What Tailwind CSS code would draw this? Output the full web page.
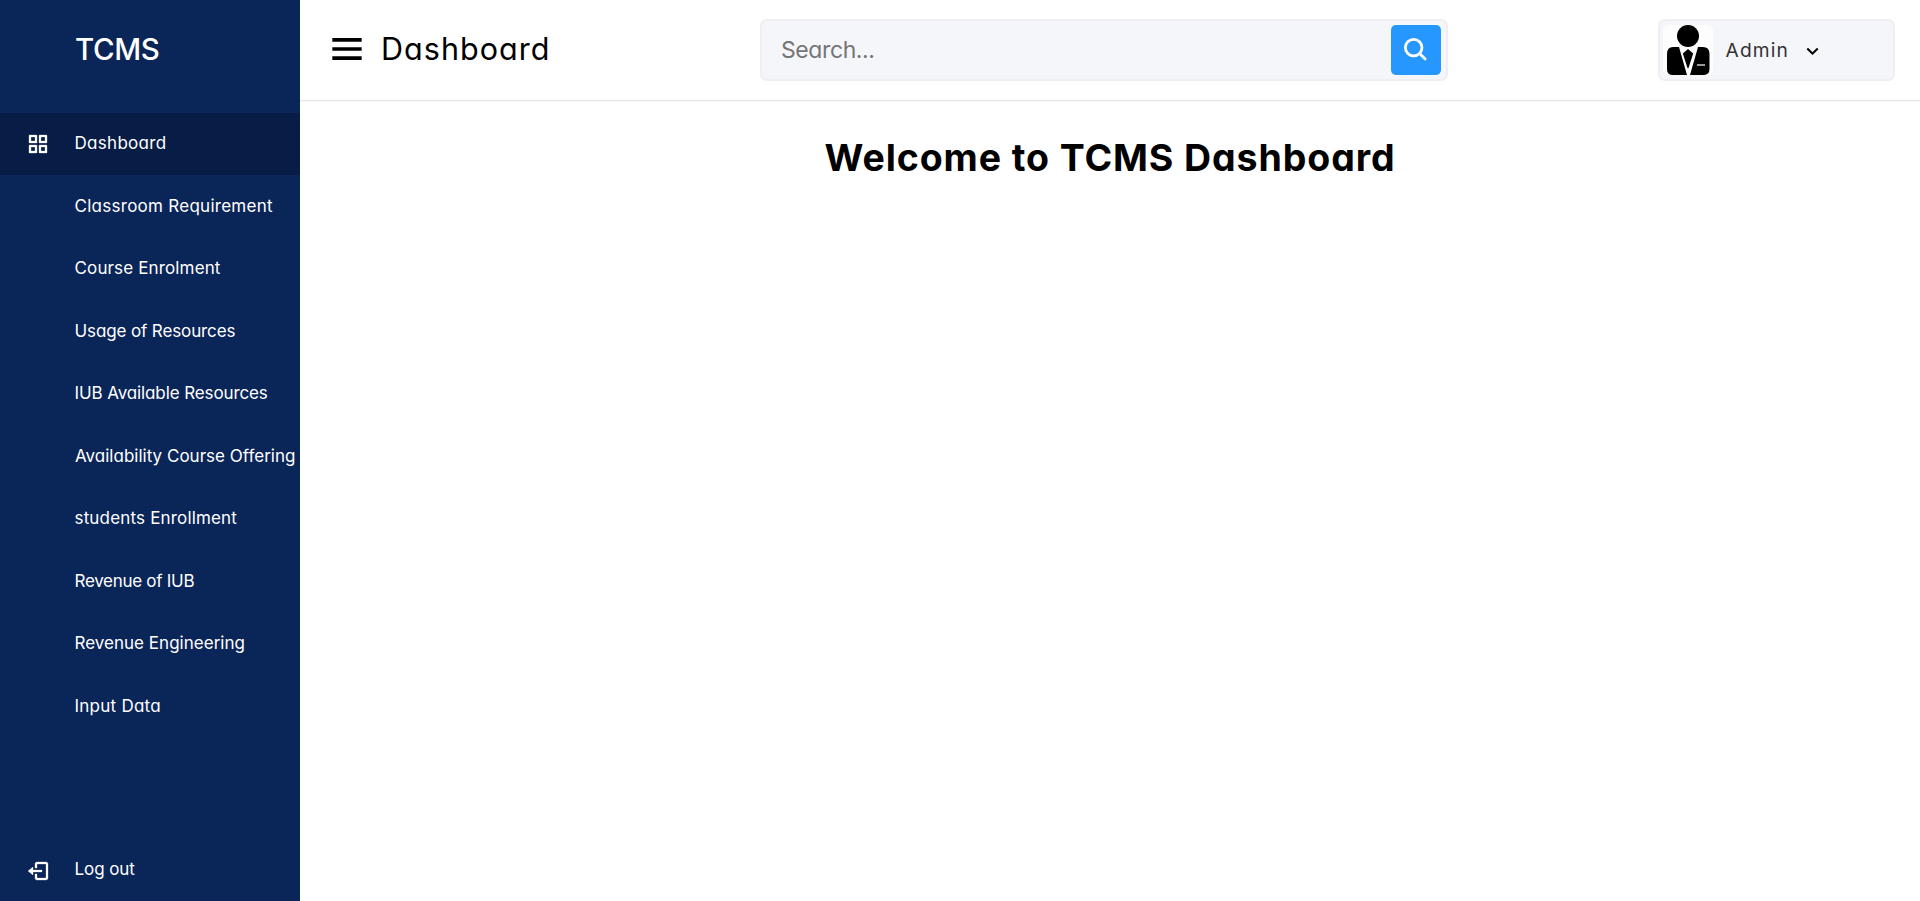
<!DOCTYPE html>
<html lang="en">
<head>
<meta charset="utf-8">
<title>TCMS Dashboard</title>
<script src="https://cdn.jsdelivr.net/npm/@tailwindcss/browser@4"></script>
</head>
<body class="flex h-[901px] overflow-hidden bg-white font-['Inter',sans-serif] text-black [font-feature-settings:'cv11']">
  <aside class="flex w-[300px] shrink-0 flex-col bg-[#0A2558] text-[17px] whitespace-nowrap text-white">
    <div class="flex h-[99px] items-center pl-[75px] text-[29.5px] font-medium tracking-[-0.4px]">TCMS</div>
    <nav class="mt-[13.5px] flex flex-1 flex-col">
      <a class="flex h-[62.5px] items-center bg-[#081D45]">
        <span class="flex w-[74px] justify-center pr-px pl-[3px]">
          <svg class="size-6" viewBox="0 0 24 24" fill="currentColor" stroke="currentColor" stroke-width="0.3"><path fill-rule="evenodd" d="M3.600 3h6.800a.6.6 0 0 1 .6.6v6.800a.6.6 0 0 1-.6.6H3.600a.6.6 0 0 1-.6-.6V3.600a.6.6 0 0 1 .6-.6zM5 5v4h4V5zM13.600 3h6.800a.6.6 0 0 1 .6.6v6.800a.6.6 0 0 1-.6.6h-6.800a.6.6 0 0 1-.6-.6V3.600a.6.6 0 0 1 .6-.6zM15 5v4h4V5zM3.600 13h6.800a.6.6 0 0 1 .6.6v6.800a.6.6 0 0 1-.6.6H3.600a.6.6 0 0 1-.6-.6v-6.800a.6.6 0 0 1 .6-.6zM5 15v4h4v-4zM13.600 13h6.800a.6.6 0 0 1 .6.6v6.800a.6.6 0 0 1-.6.6h-6.800a.6.6 0 0 1-.6-.6v-6.800a.6.6 0 0 1 .6-.6zM15 15v4h4v-4z"/></svg>
        </span>
        <span class="pl-[0.5px] tracking-[0.3px]">Dashboard</span>
      </a>
      <a class="flex h-[62.5px] items-center pl-[74.5px] tracking-[0.27px]">Classroom Requirement</a>
      <a class="flex h-[62.5px] items-center pl-[74.5px] tracking-[0.14px]">Course Enrolment</a>
      <a class="flex h-[62.5px] items-center pl-[74.5px] tracking-[-0.12px]">Usage of Resources</a>
      <a class="flex h-[62.5px] items-center pl-[74.5px] tracking-[-0.11px]">IUB Available Resources</a>
      <a class="flex h-[62.5px] items-center pl-[75px] tracking-[0.01px]">Availability Course Offering</a>
      <a class="flex h-[62.5px] items-center pl-[74.5px] tracking-[0.17px]">students Enrollment</a>
      <a class="flex h-[62.5px] items-center pl-[74.5px] tracking-[-0.29px]">Revenue of IUB</a>
      <a class="flex h-[62.5px] items-center pl-[74.5px] tracking-[0.02px]">Revenue Engineering</a>
      <a class="flex h-[62.5px] items-center pl-[74.5px] tracking-[0.25px]">Input Data</a>
      <a class="mt-auto flex h-[62px] items-center">
        <span class="flex w-[74px] justify-center pt-0.5 pl-[2px]">
          <svg class="size-6" viewBox="0 0 24 24" fill="currentColor" stroke="currentColor" stroke-width="0.3"><path d="M16 13v-2H7V8l-5 4 5 4v-3z"/><path d="M20 3h-9c-1.103 0-2 .897-2 2v4h2V5h9v14h-9v-4H9v4c0 1.103.897 2 2 2h9c1.103 0 2-.897 2-2V5c0-1.103-.897-2-2-2z"/></svg>
        </span>
        <span class="pl-[0.5px] tracking-[-0.08px]">Log out</span>
      </a>
    </nav>
  </aside>

  <div class="flex min-w-0 flex-1 flex-col">
    <header class="flex h-[100px] shrink-0 items-center justify-between pr-[25px] pl-[25px] shadow-[0_1px_1px_rgba(0,0,0,0.1)]">
      <div class="flex w-[435px] items-center gap-[12px] pb-[2px]">
        <svg class="size-11 shrink-0" viewBox="0 0 24 24" fill="currentColor"><path d="M4 6h16v2H4zm0 5h16v2H4zm0 5h16v2H4z"/></svg>
        <span class="text-[30.5px] tracking-[1.05px]">Dashboard</span>
      </div>
      <div class="flex h-[62px] w-[688px] items-center justify-between rounded-[7px] border-2 border-[#EFEEF1] bg-[#F5F6FA] pr-[5px] pl-[19px]">
        <span class="text-[23px] tracking-[-0.4px] text-[#757575]">Search...</span>
        <button class="flex size-[50px] items-center justify-center rounded-[5px] bg-[#2697FF] text-white">
          <svg class="size-7" viewBox="0 0 24 24" fill="none" stroke="currentColor" stroke-width="2.400" stroke-linecap="round"><circle cx="10" cy="10" r="7.100"/><path d="m15.500 15.500 4.300 4.300"/></svg>
        </button>
      </div>
      <div class="ml-[210px] flex h-[62px] w-[237px] items-center rounded-[7px] border-2 border-[#EFEEF1] bg-[#F5F6FA] pl-[3px]">
        <svg class="size-[50px] rounded-[6px] bg-[#FDFDFE]" viewBox="0 0 50 50">
          <circle cx="25" cy="11" r="11"/>
          <path d="M10 22h6l8 28H10q-6 0-6-6V29q0-7 6-7zM35 22h5q6.500 0 6.500 7v15q0 6-6.500 6H27z"/>
          <path d="M25 24l5.200 4.500L25.500 43h-1L19.800 28.500z"/>
          <path d="M34 40h8" stroke="#ccc" stroke-width="1.500"/>
        </svg>
        <span class="ml-[12.500px] w-[74.500px] pt-[1.500px] text-[19.200px] tracking-[1.150px] text-[#333333]">Admin</span>
        <svg class="size-[25px]" viewBox="0 0 24 24" fill="currentColor"><path d="M16.293 9.293 12 13.586 7.707 9.293l-1.414 1.414L12 16.414l5.707-5.707z"/></svg>
      </div>
    </header>
    <main class="flex justify-center pt-[30px]">
      <h1 class="text-[37.500px] leading-[56px] font-bold tracking-[0.900px]">Welcome to TCMS Dashboard</h1>
    </main>
  </div>
</body>
</html>
